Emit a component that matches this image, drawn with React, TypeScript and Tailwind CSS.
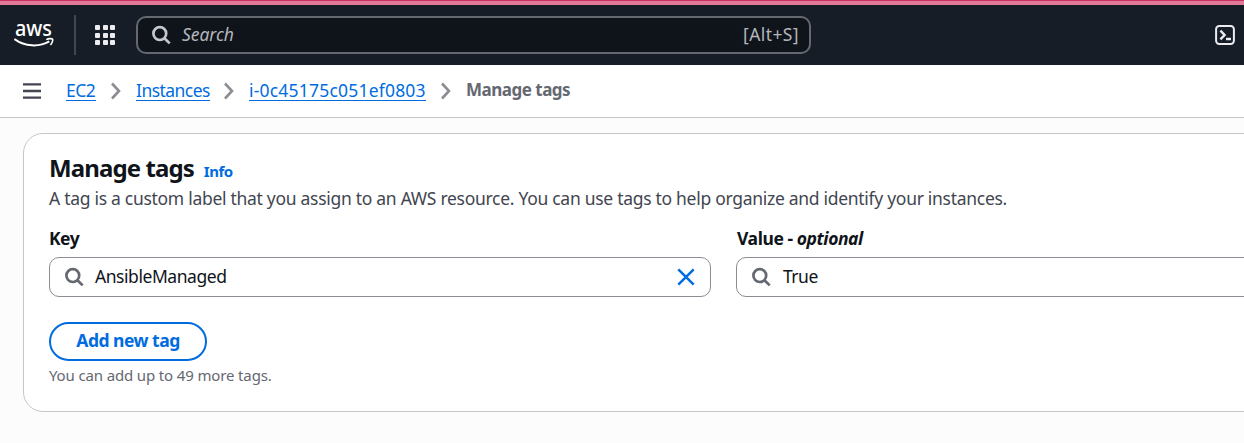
import React from "react";

function SearchIcon({ className }: { className: string }) {
  return (
    <svg className={className} width="20" height="20" viewBox="0 0 20 20" fill="none" stroke="currentColor" strokeWidth="2.7">
      <circle cx="7.8" cy="8.6" r="6.4" />
      <path d="M12.4 13.2l5.3 5.2" />
    </svg>
  );
}

function Chevron() {
  return (
    <svg width="10" height="18" viewBox="0 0 10 18" fill="none" stroke="#8c8c94" strokeWidth="2.6" className="shrink-0">
      <path d="M1 1.5L8 9L1 16.5" />
    </svg>
  );
}

function Crumb({ children, className }: { children: React.ReactNode; className: string }) {
  return (
    <a href="#" className={`mb-[2px] block h-[22px] shrink-0 whitespace-nowrap border-b border-[#006ce0] leading-[22px] text-[#006ce0] ${className}`}>
      {children}
    </a>
  );
}

function TopBar() {
  return (
    <header className="flex h-[60px] items-center bg-[#161d26]">
      <div className="ml-[14px] h-[54px] w-[40px] shrink-0">
        <svg width="40" height="54" viewBox="0 -10 40 54" fill="none">
          <text x="1" y="17.6" fill="#fff" fontSize="21.5" fontFamily="Noto Sans" fontWeight="500" textLength="37" lengthAdjust="spacingAndGlyphs">aws</text>
          <path d="M.4 21C11 28.8 25 29.3 35.3 23.4" stroke="#fff" strokeWidth="2" />
          <path d="M32.3 21.6c2.4-1.2 5.7-1.2 6.3-.4.5.9-.4 4-2.2 5.8" stroke="#fff" strokeWidth="1.6" />
        </svg>
      </div>
      <div className="ml-5 h-10 w-[2px] shrink-0 bg-[#424650]" />
      <div className="ml-[19px] grid shrink-0 grid-cols-3 gap-[2.5px]">
        {Array.from({ length: 9 }, (_, i) => (
          <span key={i} className="size-[5px] rounded-[1px] bg-[#ebebf0]" />
        ))}
      </div>
      <div className="ml-[21px] flex h-[38px] w-[675px] shrink-0 items-center rounded-[10px] border-2 border-[#656871] bg-[#0f141a] pl-[14px] pr-[10px]">
        <SearchIcon className="shrink-0 text-[#c6c6cd]" />
        <span className="mb-[1px] ml-[10px] text-[17.5px] italic tracking-[-0.05px] text-[#b4b4bb]">Search</span>
        <span className="mb-[1px] ml-auto text-[17.5px] tracking-[0.4px] text-[#b4b4bb]">[Alt+S]</span>
      </div>
      <svg className="ml-auto mr-[9px] shrink-0" width="20" height="20" viewBox="0 0 20 20" fill="none" stroke="#ebebf0" strokeWidth="2">
        <rect x="1.1" y="1.1" width="17.8" height="17.8" rx="3.2" />
        <path d="M5.4 5.6L9.6 10L5.4 14.4M11 14h5" strokeWidth="2.4" />
      </svg>
    </header>
  );
}

function Breadcrumbs() {
  return (
    <nav className="flex h-[53px] items-center border-b border-[#c6c6cd] bg-white text-[17.5px]">
      <svg className="ml-[23px] mr-[25px] shrink-0" width="18" height="16" viewBox="0 0 18 16" fill="none" stroke="#424650" strokeWidth="2.4">
        <path d="M0 1.4h18M0 8h18M0 14.6h18" />
      </svg>
      <Crumb className="w-[30px] tracking-[-0.5px]">EC2</Crumb>
      <div className="ml-[15px] mr-[15px]"><Chevron /></div>
      <Crumb className="w-[74px] tracking-[-0.55px]">Instances</Crumb>
      <div className="ml-[14px] mr-[15px]"><Chevron /></div>
      <Crumb className="w-[177px] tracking-[0.2px]">i-0c45175c051ef0803</Crumb>
      <div className="ml-[15px] mr-[15px]"><Chevron /></div>
      <span className="mb-[2px] whitespace-nowrap text-[17px] font-bold tracking-[-0.5px] text-[#656871]">Manage tags</span>
    </nav>
  );
}

export default function App() {
  return (
    <div className="h-[443px] w-full overflow-hidden bg-[#fcfcfc] font-['Noto_Sans',sans-serif] text-[#0f141a]">
      <div className="h-[5px] border-t border-[#c83264] bg-[#e07a98]" />
      <TopBar />
      <Breadcrumbs />
      <main className="mt-[15px] ml-[23px]">
        <section className="h-[279px] w-[1400px] rounded-[20px] border border-[#c6c6cd] bg-white pl-[25px]">
          <div className="flex h-[30px] items-baseline whitespace-nowrap pt-[19px]">
            <h1 className="text-[24px] font-bold leading-[30px] tracking-[-0.9px]">Manage tags</h1>
            <a href="#" className="ml-[10px] text-[15px] font-bold tracking-[-0.5px] text-[#006ce0]">Info</a>
          </div>
          <p className="mt-[21px] h-[26px] whitespace-nowrap text-[17.5px] leading-[26px] tracking-[-0.29px] text-[#424650]">
            A tag is a custom label that you assign to an AWS resource. You can use tags to help organize and identify your instances.
          </p>
          <div className="mt-[14px] flex gap-[25px]">
            <div className="w-[662px] shrink-0">
              <label className="block h-8 text-[17.5px] font-bold leading-[26px] tracking-[-0.5px]">Key</label>
              <div className="flex h-10 items-center rounded-[10px] border border-[#8c8c94] pl-[15px] pr-[15px]">
                <SearchIcon className="shrink-0 text-[#656871]" />
                <span className="ml-[10px] mb-[2px] text-[17.5px] tracking-[-0.45px]">AnsibleManaged</span>
                <svg className="ml-auto" width="18" height="18" viewBox="0 0 18 18" stroke="#006ce0" strokeWidth="2.5">
                  <path d="M1.3 1.3l15.4 15.4M16.7 1.3L1.3 16.7" />
                </svg>
              </div>
            </div>
            <div className="w-[662px] shrink-0">
              <label className="block h-8 pl-[1px] text-[17.5px] font-bold leading-[26px] tracking-[-0.43px]">
                Value - <i>optional</i>
              </label>
              <div className="flex h-10 items-center rounded-[10px] border border-[#8c8c94] pl-[15px]">
                <SearchIcon className="shrink-0 text-[#656871]" />
                <span className="ml-[11px] mb-[2px] text-[17.5px] tracking-[-0.5px]">True</span>
              </div>
            </div>
          </div>
          <button className="mt-[25px] flex h-[39px] w-[158px] items-center justify-center whitespace-nowrap rounded-full border-2 border-[#006ce0] pb-[2px] text-[17.5px] font-bold tracking-[-0.5px] text-[#006ce0]">
            Add new tag
          </button>
          <p className="mt-[4px] whitespace-nowrap text-[15px] leading-5 tracking-[-0.14px] text-[#656871]">You can add up to 49 more tags.</p>
        </section>
      </main>
    </div>
  );
}
